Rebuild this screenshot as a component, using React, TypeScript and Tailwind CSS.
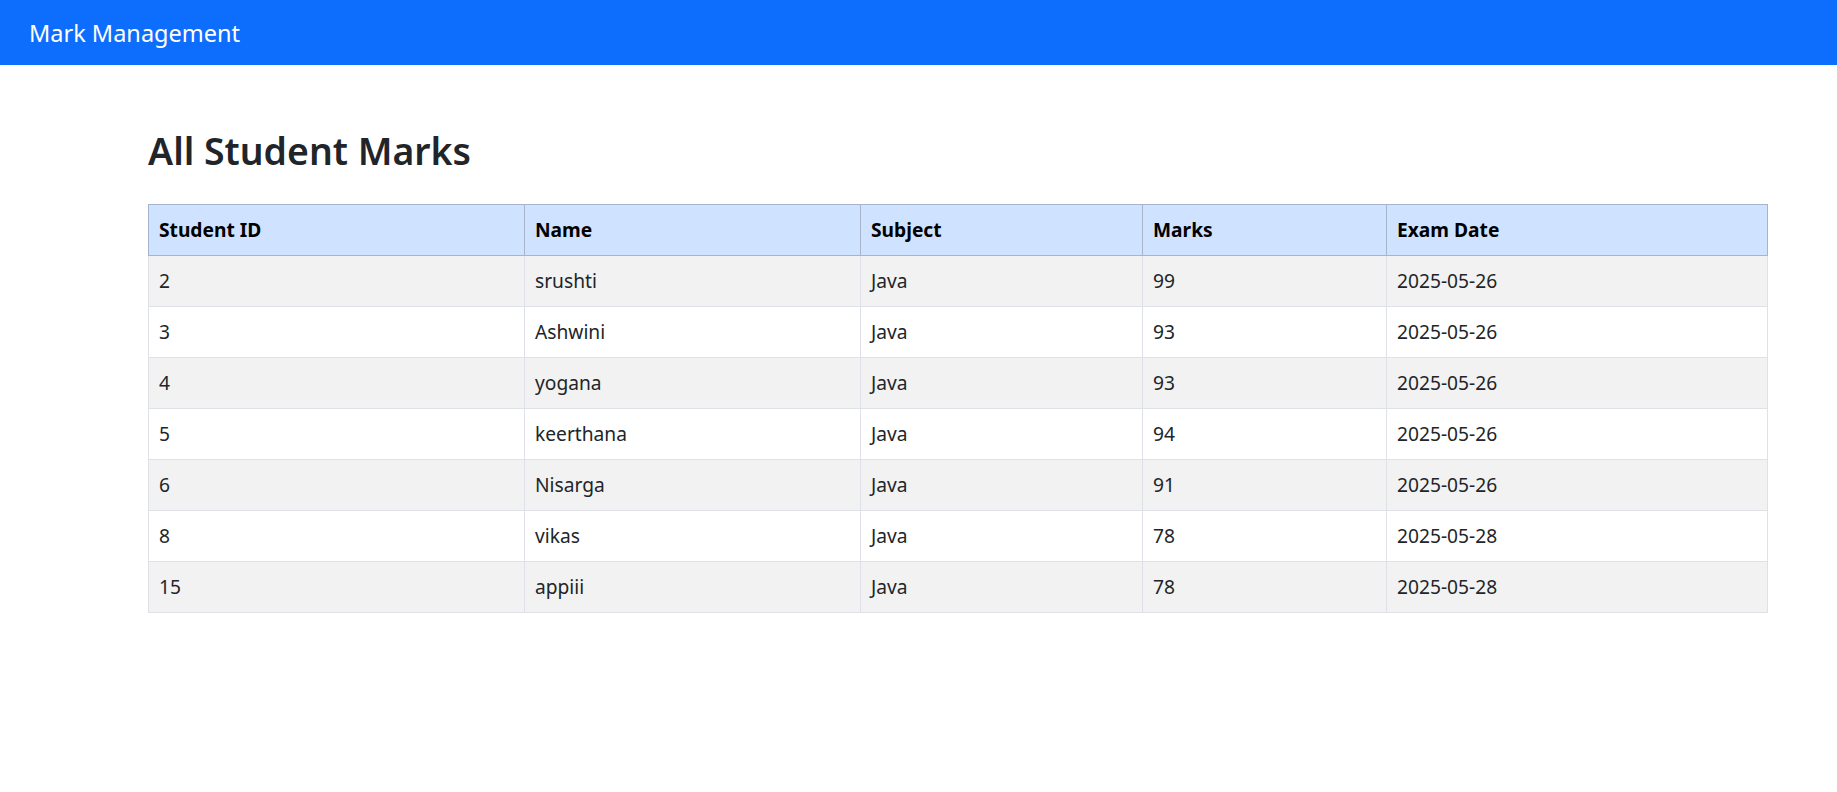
const rows = [
  { id: 2, name: 'srushti', subject: 'Java', marks: 99, date: '2025-05-26' },
  { id: 3, name: 'Ashwini', subject: 'Java', marks: 93, date: '2025-05-26' },
  { id: 4, name: 'yogana', subject: 'Java', marks: 93, date: '2025-05-26' },
  { id: 5, name: 'keerthana', subject: 'Java', marks: 94, date: '2025-05-26' },
  { id: 6, name: 'Nisarga', subject: 'Java', marks: 91, date: '2025-05-26' },
  { id: 8, name: 'vikas', subject: 'Java', marks: 78, date: '2025-05-28' },
  { id: 15, name: 'appiii', subject: 'Java', marks: 78, date: '2025-05-28' },
]

const headers = ['Student ID', 'Name', 'Subject', 'Marks', 'Exam Date']

const App = () => {
  return (
    <div className="min-h-screen bg-white font-['Noto_Sans',sans-serif] text-[#212529]">
      <header className="flex h-[65px] items-center bg-[#0d6efd] px-[29px]">
        <span className="text-[23.5px] leading-[34px] text-white">Mark Management</span>
      </header>
      <main className="pl-[148px] pr-[69px] pt-[63px]">
        <h1 className="mb-[30px] text-[37.4px] font-semibold leading-[46px]">All Student Marks</h1>
        <table className="w-full border-collapse text-[19.2px] leading-[28px]">
          <colgroup>
            <col className="w-[376px]" />
            <col className="w-[336px]" />
            <col className="w-[282px]" />
            <col className="w-[244px]" />
            <col />
          </colgroup>
          <thead>
            <tr className="bg-[#cfe2ff]">
              {headers.map((h) => (
                <th
                  key={h}
                  className="h-[51px] border border-[#a6b5cc] px-[10px] text-left font-bold text-black"
                >
                  {h}
                </th>
              ))}
            </tr>
          </thead>
          <tbody>
            {rows.map((r, i) => (
              <tr key={r.id} className={i % 2 === 0 ? 'bg-[#f2f2f2]' : 'bg-white'}>
                <td className="h-[51px] border border-[#dee2e6] px-[10px]">{r.id}</td>
                <td className="h-[51px] border border-[#dee2e6] px-[10px]">{r.name}</td>
                <td className="h-[51px] border border-[#dee2e6] px-[10px]">{r.subject}</td>
                <td className="h-[51px] border border-[#dee2e6] px-[10px]">{r.marks}</td>
                <td className="h-[51px] border border-[#dee2e6] px-[10px]">{r.date}</td>
              </tr>
            ))}
          </tbody>
        </table>
      </main>
    </div>
  )
}

export default App
